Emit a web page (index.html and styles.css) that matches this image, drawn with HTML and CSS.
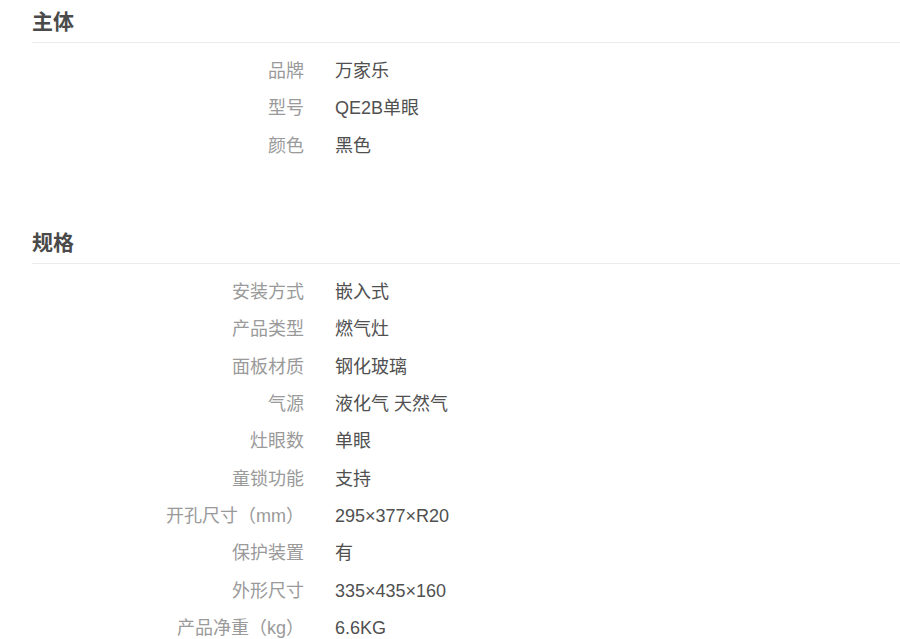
FILE: index.html
```html
<!DOCTYPE html>
<html lang="zh-CN">
<head>
  <meta charset="UTF-8">
  <meta name="viewport" content="width=device-width, initial-scale=1.0">
  <title>规格参数</title>
  <link rel="stylesheet" href="styles.css">
</head>
<body>

<div class="section">
  <h2>主体</h2>
  <dl class="spec-list">
    <dt>品牌</dt><dd>万家乐</dd>
    <dt>型号</dt><dd>QE2B单眼</dd>
    <dt>颜色</dt><dd>黑色</dd>
  </dl>
</div>

<div class="section">
  <h2>规格</h2>
  <dl class="spec-list">
    <dt>安装方式</dt><dd>嵌入式</dd>
    <dt>产品类型</dt><dd>燃气灶</dd>
    <dt>面板材质</dt><dd>钢化玻璃</dd>
    <dt>气源</dt><dd>液化气 天然气</dd>
    <dt>灶眼数</dt><dd>单眼</dd>
    <dt>童锁功能</dt><dd>支持</dd>
    <dt>开孔尺寸（mm）</dt><dd>295×377×R20</dd>
    <dt>保护装置</dt><dd>有</dd>
    <dt>外形尺寸</dt><dd>335×435×160</dd>
    <dt>产品净重（kg）</dt><dd>6.6KG</dd>
  </dl>
</div>

</body>
</html>
```

FILE: styles.css
```css
body {
  margin: 0;
  padding: 0;
  background-color: #fff;
  font-family: "Liberation Sans", Arial, "Noto Sans CJK SC", sans-serif;
}
.section {
  padding-left: 32px;
  margin-bottom: 56px;
}
.section:last-child {
  margin-bottom: 0;
}
.section h2 {
  margin: 0;
  padding: 8px 0 6px;
  font-size: 21px;
  line-height: 28px;
  font-weight: bold;
  color: #4a4a4a;
  border-bottom: 1px solid #ebebeb;
}
.spec-list {
  display: grid;
  grid-template-columns: 272px 1fr;
  column-gap: 31px;
  margin: 10px 0 0;
  font-size: 18px;
}
.spec-list dt,
.spec-list dd {
  margin: 0;
  line-height: 37.33px;
}
.spec-list dt {
  text-align: right;
  color: #9a9a9a;
}
.spec-list dd {
  color: #505050;
}
```
